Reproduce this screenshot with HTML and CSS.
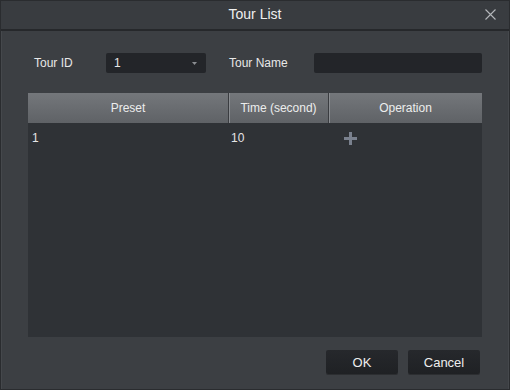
FILE: index.html
```html
<!DOCTYPE html>
<html lang="en">
<head>
  <meta charset="UTF-8">
  <title>Tour List</title>
  <link rel="stylesheet" href="styles.css">
</head>
<body>

  <div class="dialog">
    <div class="titlebar">
      <span class="title">Tour List</span>
      <svg class="close" width="11" height="11" viewBox="0 0 11 11"><path d="M0.5 0.5 L10.5 10.5 M10.5 0.5 L0.5 10.5" stroke="#b4b7ba" stroke-width="1.1" fill="none"/></svg>
    </div>

    <div class="content">
      <div class="form-row">
        <label class="label id-label">Tour ID</label>
        <div class="select">
          <span>1</span>
          <svg width="5" height="3" viewBox="0 0 5 3"><path d="M0 0 H5 L2.5 3 Z" fill="#8b8e92"/></svg>
        </div>
        <label class="label name-label">Tour Name</label>
        <div class="input"></div>
      </div>

      <div class="table">
        <div class="thead">
          <div class="th col-preset">Preset</div>
          <div class="th col-time">Time (second)</div>
          <div class="th col-op">Operation</div>
        </div>
        <div class="tbody">
          <div class="tr">
            <div class="td col-preset">1</div>
            <div class="td col-time">10</div>
            <div class="td col-op">
              <svg class="plus" width="13" height="13" viewBox="0 0 13 13"><path d="M5 0 H8 V5 H13 V8 H8 V13 H5 V8 H0 V5 H5 Z" fill="#7a818e"/></svg>
            </div>
          </div>
        </div>
      </div>

      <div class="actions">
        <button class="btn">OK</button>
        <button class="btn">Cancel</button>
      </div>
    </div>
  </div>

</body>
</html>
```

FILE: styles.css
```css
* {
  margin: 0;
  padding: 0;
  box-sizing: border-box;
}

body {
  width: 510px;
  height: 390px;
  overflow: hidden;
  background: #3b3e42;
  font-family: 'Liberation Sans', Arial, sans-serif;
  font-size: 12px;
  color: #e6e7e8;
}

.dialog {
  width: 510px;
  height: 390px;
  display: flex;
  flex-direction: column;
  background: #3c3f43;
  border: 1px solid #2a2c2f;
  box-shadow: inset 1px 0 0 #45484c, inset -1px 0 0 #45484c;
}

.titlebar {
  height: 30px;
  flex-shrink: 0;
  display: flex;
  align-items: center;
  justify-content: center;
  position: relative;
  background: #393c40;
  border-bottom: 2px solid #26282b;
}

.title {
  font-size: 14px;
  color: #f0f0f0;
  margin-top: -2px;
}

.close {
  position: absolute;
  right: 13px;
  top: 8px;
}

.content {
  flex: 1;
  display: flex;
  flex-direction: column;
  padding: 22px 27px 0 27px;
}

.form-row {
  display: flex;
  align-items: center;
  height: 20px;
}

.label {
  color: #e8e8e8;
}

.id-label {
  width: 78px;
  padding-left: 6px;
}

.select {
  width: 100px;
  height: 20px;
  background: #232529;
  border-radius: 2px;
  display: flex;
  align-items: center;
  justify-content: space-between;
  padding: 0 9px 0 8px;
}

.name-label {
  width: 108px;
  padding-left: 23px;
}

.input {
  width: 168px;
  height: 20px;
  background: #232529;
  border-radius: 2px;
}

.table {
  margin-top: 20px;
  width: 454px;
  height: 244px;
  display: flex;
  flex-direction: column;
  background: #2f3236;
}

.thead {
  display: flex;
  height: 30px;
  background: linear-gradient(to bottom, #74777b, #5f6266);
}

.th {
  display: flex;
  align-items: center;
  justify-content: center;
  color: #eceded;
  border-left: 1px solid #3a3c40;
  box-shadow: inset 1px 0 0 #8a8d91;
}

.th:first-child {
  border-left: none;
  box-shadow: none;
}

.col-preset { width: 200px; }
.col-time { width: 100px; }
.col-op { width: 154px; }

.tr {
  display: flex;
  height: 30px;
  align-items: center;
}

.td {
  padding-left: 4px;
  color: #e4e5e6;
}

.td.col-time {
  padding-left: 3px;
}

.td.col-op {
  padding-left: 16px;
  display: flex;
  align-items: center;
}

.actions {
  display: flex;
  justify-content: flex-end;
  gap: 10px;
  margin-top: 13px;
  padding-right: 2px;
}

.btn {
  width: 72px;
  height: 24px;
  border: none;
  border-radius: 2px;
  background: linear-gradient(to bottom, #26282c, #1f2124);
  box-shadow: 0 1px 0 #2c2e31;
  color: #eeeeee;
  font-family: 'Liberation Sans', Arial, sans-serif;
  font-size: 13px;
}
```
